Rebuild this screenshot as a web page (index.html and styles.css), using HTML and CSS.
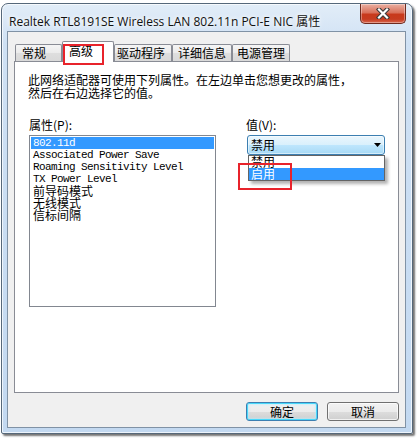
FILE: index.html
```html
<!DOCTYPE html>
<html lang="zh-CN">
<head>
<meta charset="utf-8">
<title>属性</title>
<link rel="stylesheet" href="styles.css">
</head>
<body>
<div class="window">
  <div class="titlebar">
    <span class="title">Realtek RTL8191SE Wireless LAN 802.11n PCI-E NIC <span class="cjk">属性</span></span>
    <div class="close">
      <svg width="14" height="11" viewBox="0 0 14 11"><path d="M3 1.5 L11 9.5 M11 1.5 L3 9.5" stroke="#3b3b3b" stroke-width="4.4" stroke-linecap="square" fill="none"/><path d="M3 1.5 L11 9.5 M11 1.5 L3 9.5" stroke="#ffffff" stroke-width="2.2" stroke-linecap="square" fill="none"/></svg>
    </div>
  </div>
  <div class="client">
    <div class="tabs">
      <div class="tab t1">常规</div>
      <div class="tab t2 active">高级</div>
      <div class="tab t3">驱动程序</div>
      <div class="tab t4">详细信息</div>
      <div class="tab t5">电源管理</div>
    </div>
    <div class="panel">
      <p class="desc">此网络适配器可使用下列属性。在左边单击您想更改的属性，<br>然后在右边选择它的值。</p>
      <div class="cols">
        <div class="left">
          <div class="label">属性(P):</div>
          <div class="listbox">
            <div class="row sel mono">802.11d</div>
            <div class="row mono">Associated Power Save</div>
            <div class="row mono">Roaming Sensitivity Level</div>
            <div class="row mono">TX Power Level</div>
            <div class="row">前导码模式</div>
            <div class="row">无线模式</div>
            <div class="row">信标间隔</div>
          </div>
        </div>
        <div class="right">
          <div class="label">值(V):</div>
          <div class="combo">
            <span>禁用</span>
            <svg class="arrow" width="7" height="4" viewBox="0 0 7 4"><path d="M0 0 H7 L3.5 4 Z" fill="#000"/></svg>
          </div>
          <div class="droplist">
            <div class="opt">禁用</div>
            <div class="opt sel">启用</div>
          </div>
        </div>
      </div>
    </div>
    <div class="buttons">
      <div class="btn default">确定</div>
      <div class="btn">取消</div>
    </div>
  </div>
</div>
<div class="mark mark1"></div>
<div class="mark mark2"></div>
</body>
</html>
```

FILE: styles.css
```css
* { box-sizing: border-box; }
html, body { margin: 0; padding: 0; background: #ffffff; }
body {
  position: relative;
  width: 420px;
  height: 439px;
  overflow: hidden;
  font-family: "Noto Sans CJK SC", sans-serif;
  font-size: 12px;
  color: #000;
}

.window {
  margin: 3px 0 0 1px;
  width: 412px;
  height: 431px;
  border: 1px solid #56687a;
  border-radius: 7px 7px 2px 2px;
  background: linear-gradient(#e2edf8, #cfe1f4 40px, #c3d9f1);
  padding: 0 6px 5px 5px;
  display: flex;
  flex-direction: column;
  box-shadow: 2px 2px 2px rgba(0,0,0,0.55), inset 0 0 0 1px rgba(255,255,255,0.7);
}

.titlebar {
  height: 27px;
  display: flex;
  justify-content: space-between;
  align-items: flex-start;
}
.title {
  padding: 9px 0 0 2px;
  line-height: 16px;
  font-family: "Open Sans", "Noto Sans CJK SC", sans-serif;
  font-size: 12px;
  color: #111;
  white-space: nowrap;
  text-shadow: 0 0 6px #fff, 0 0 4px #fff;
}
.title .cjk { font-family: "Noto Sans CJK SC", sans-serif; }

.close {
  width: 46px;
  height: 20px;
  border: 1px solid #6e2a1e;
  border-top: none;
  border-radius: 0 0 5px 5px;
  background: linear-gradient(#eab0a2, #d9715b 45%, #c8391c 55%, #c63c20 80%, #d8674f);
  display: flex;
  align-items: center;
  justify-content: center;
  box-shadow: inset 0 0 0 1px rgba(255,255,255,0.35);
}

.client {
  height: 397px;
  border: 1px solid #8092a5;
  background: #f0f0f0;
  padding: 9px 6px 6px 6px;
  display: flex;
  flex-direction: column;
}

.tabs {
  height: 20px;
  display: flex;
  align-items: flex-end;
  padding-left: 1px;
}
.tab {
  height: 17px;
  border: 1px solid #898c95;
  border-bottom: none;
  border-radius: 2px 2px 0 0;
  background: linear-gradient(#f5f5f5, #ebebeb 50%, #dedede 51%, #d9d9d9);
  line-height: 16px;
  padding-left: 6px;
  white-space: nowrap;
}
.tab.t1 { width: 47px; }
.tab.t2 { width: 52px; }
.tab.t3 { width: 58px; padding-left: 2px; }
.tab.t4 { width: 60px; padding-left: 5px; }
.tab.t5 { width: 58px; padding-left: 4px; }
.tab.active {
  position: relative;
  z-index: 1;
  height: 21px;
  margin-bottom: -1px;
  padding-top: 1px;
  background: #ffffff;
}

.panel {
  height: 332px;
  border: 1px solid #898c95;
  background: #ffffff;
  padding: 11px 13px 0 13px;
}
.desc {
  margin: 0;
  line-height: 13px;
  white-space: nowrap;
}
.cols {
  display: flex;
  margin-top: 19px;
  margin-left: 1px;
}
.label {
  line-height: 13px;
  height: 13px;
  margin-bottom: 4px;
}
.left { width: 187px; }
.right {
  position: relative;
  margin-left: 31px;
  width: 139px;
}
.right .label { margin-left: -1px; }

.listbox {
  width: 187px;
  height: 172px;
  border: 1px solid #828790;
  padding: 1px;
}
.row {
  height: 12px;
  line-height: 12px;
  padding-left: 2px;
  white-space: nowrap;
}
.row.mono {
  font-family: "Liberation Mono", monospace;
  font-size: 11px;
  letter-spacing: -0.6px;
}
.row.sel { background: #3399ff; color: #fff; }

.combo {
  width: 138px;
  height: 20px;
  border: 1px solid #3c7fb1;
  border-radius: 3px;
  background: linear-gradient(#eaf6fd, #d9f0fc 50%, #bee6fd 51%, #a7d9f5);
  display: flex;
  align-items: center;
  justify-content: space-between;
  padding: 0 3px 0 3px;
  line-height: 16px;
  box-shadow: inset 0 0 0 1px rgba(255,255,255,0.5);
}

.droplist {
  position: absolute;
  left: 1px;
  top: 37px;
  width: 137px;
  border: 1px solid #646464;
  background: #fff;
  box-shadow: 3px 3px 3px rgba(0,0,0,0.3);
}
.opt {
  height: 12px;
  line-height: 12px;
  padding-left: 2px;
}
.opt.sel { background: #3399ff; color: #fff; }

.buttons {
  margin-top: 9px;
  display: flex;
  justify-content: flex-end;
  gap: 9px;
}
.btn {
  width: 72px;
  height: 19px;
  border: 1px solid #707070;
  border-radius: 3px;
  background: linear-gradient(#f2f2f2, #ebebeb 50%, #dddddd 51%, #cfcfcf);
  box-shadow: inset 0 0 0 1px rgba(255,255,255,0.7);
  text-align: center;
  line-height: 17px;
}
.btn.default {
  border-color: #3c7fb1;
  box-shadow: inset 0 0 0 1px #48d8fb, inset 0 0 2px 2px rgba(180,235,252,0.6);
}

.mark {
  position: absolute;
  border: 2px solid #e8232b;
  z-index: 5;
}
.mark1 { left: 63px; top: 44px; width: 41px; height: 21px; }
.mark2 { left: 238px; top: 163px; width: 54px; height: 27px; }
```
